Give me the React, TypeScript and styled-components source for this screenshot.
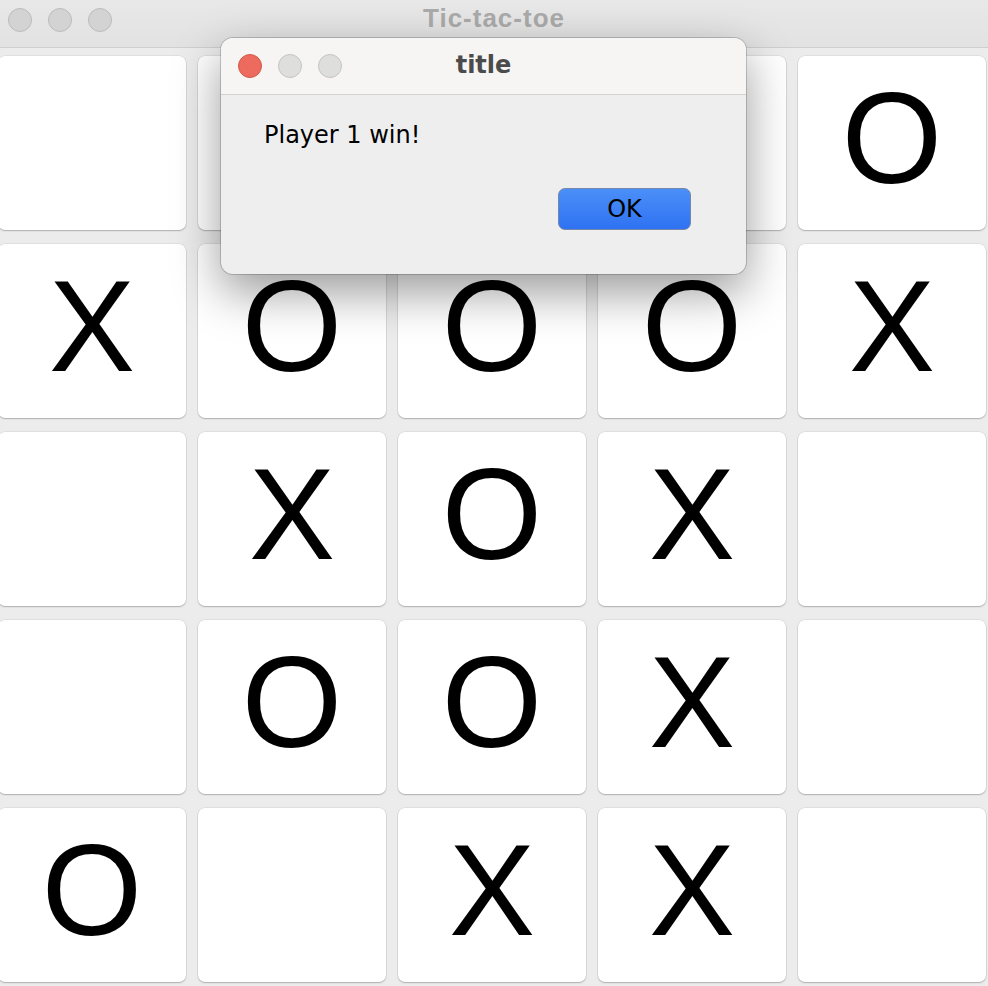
import React from "react";
import styled, { createGlobalStyle } from "styled-components";

const Global = createGlobalStyle`
  html, body { margin: 0; padding: 0; }
  body {
    background: #ececec;
    overflow: hidden;
    font-family: "Liberation Sans", Arial, sans-serif;
  }
`;

const Window = styled.div`
  position: relative;
  width: 988px;
  height: 986px;
  background: #ececec;
  display: flex;
  flex-direction: column;
  overflow: hidden;
`;

const TitleBar = styled.div`
  position: relative;
  height: 48px;
  flex: none;
  box-sizing: border-box;
  background: linear-gradient(#e9e8e8, #e3e2e2);
  border-bottom: 1px solid #cfcfcf;
  display: flex;
  align-items: flex-start;
  justify-content: center;
  padding-top: 3px;
`;

const Lights = styled.div<{ $left: number; $top: number }>`
  position: absolute;
  left: ${(p) => p.$left}px;
  top: ${(p) => p.$top}px;
  display: flex;
  gap: 16px;
`;

const Light = styled.span<{ $color: string; $border: string }>`
  width: 22px;
  height: 22px;
  border-radius: 50%;
  background: ${(p) => p.$color};
  border: 1px solid ${(p) => p.$border};
`;

const WindowTitle = styled.div`
  font-family: "Liberation Sans", Arial, sans-serif;
  font-weight: bold;
  font-size: 26px;
  line-height: 30px;
  letter-spacing: 1px;
  color: #aaaaaa;
`;

const Board = styled.div`
  display: grid;
  grid-template-columns: repeat(5, 188px);
  grid-auto-rows: 174px;
  column-gap: 12px;
  row-gap: 14px;
  padding-top: 8px;
  margin-left: -2px;
`;

const Cell = styled.div`
  background: #ffffff;
  border-radius: 7px;
  box-shadow: 0 0 0 0.5px rgba(0, 0, 0, 0.1), 0 1px 1.5px rgba(0, 0, 0, 0.22);
  display: flex;
  align-items: center;
  justify-content: center;
  font-family: "Liberation Sans", Arial, sans-serif;
  font-size: 129px;
  line-height: 1;
  color: #000;
  padding-bottom: 10px;
  box-sizing: border-box;
`;

const Dialog = styled.div`
  position: absolute;
  left: 221px;
  top: 38px;
  width: 525px;
  height: 236px;
  border-radius: 12px;
  background: #eeeeee;
  box-shadow: 0 0 0 1px rgba(0, 0, 0, 0.18), 0 18px 48px rgba(0, 0, 0, 0.4);
  overflow: hidden;
  display: flex;
  flex-direction: column;
`;

const DialogBar = styled.div`
  position: relative;
  height: 56px;
  flex: none;
  background: #f6f5f4;
  border-bottom: 1px solid #d2d2d2;
  display: flex;
  align-items: center;
  justify-content: center;
`;

const DialogTitle = styled.div`
  font-family: "DejaVu Sans", "Liberation Sans", sans-serif;
  font-weight: bold;
  font-size: 24px;
  color: #4b4b4b;
  margin-top: -2px;
`;

const DialogBody = styled.div`
  flex: 1;
  display: flex;
  flex-direction: column;
  padding: 26px 55px 0 43px;
`;

const Message = styled.div`
  font-family: "DejaVu Sans", "Liberation Sans", sans-serif;
  font-size: 24px;
  line-height: 28px;
  color: #000;
`;

const OkButton = styled.button`
  align-self: flex-end;
  margin-top: 39px;
  width: 133px;
  height: 42px;
  border-radius: 7px;
  border: 1.5px solid #7387a8;
  background: linear-gradient(#4b8ff8, #2f72f2);
  font-family: "DejaVu Sans", "Liberation Sans", sans-serif;
  font-size: 24px;
  color: #000;
  padding: 0;
  cursor: default;
`;

const board = [
  ["", "", "", "", "O"],
  ["X", "O", "O", "O", "X"],
  ["", "X", "O", "X", ""],
  ["", "O", "O", "X", ""],
  ["O", "", "X", "X", ""],
];

export default function App() {
  return (
    <>
      <Global />
      <Window>
        <TitleBar>
          <Lights $left={8} $top={8}>
            <Light $color="#d3d3d3" $border="#bcbcbc" />
            <Light $color="#d3d3d3" $border="#bcbcbc" />
            <Light $color="#d3d3d3" $border="#bcbcbc" />
          </Lights>
          <WindowTitle>Tic-tac-toe</WindowTitle>
        </TitleBar>
        <Board>
          {board.flatMap((row, r) =>
            row.map((v, c) => <Cell key={`${r}-${c}`}>{v}</Cell>)
          )}
        </Board>
        <Dialog>
          <DialogBar>
            <Lights $left={17} $top={16}>
              <Light $color="#ed6a5e" $border="#d4564a" />
              <Light $color="#dededd" $border="#c4c4c4" />
              <Light $color="#dededd" $border="#c4c4c4" />
            </Lights>
            <DialogTitle>title</DialogTitle>
          </DialogBar>
          <DialogBody>
            <Message>Player 1 win!</Message>
            <OkButton>OK</OkButton>
          </DialogBody>
        </Dialog>
      </Window>
    </>
  );
}
